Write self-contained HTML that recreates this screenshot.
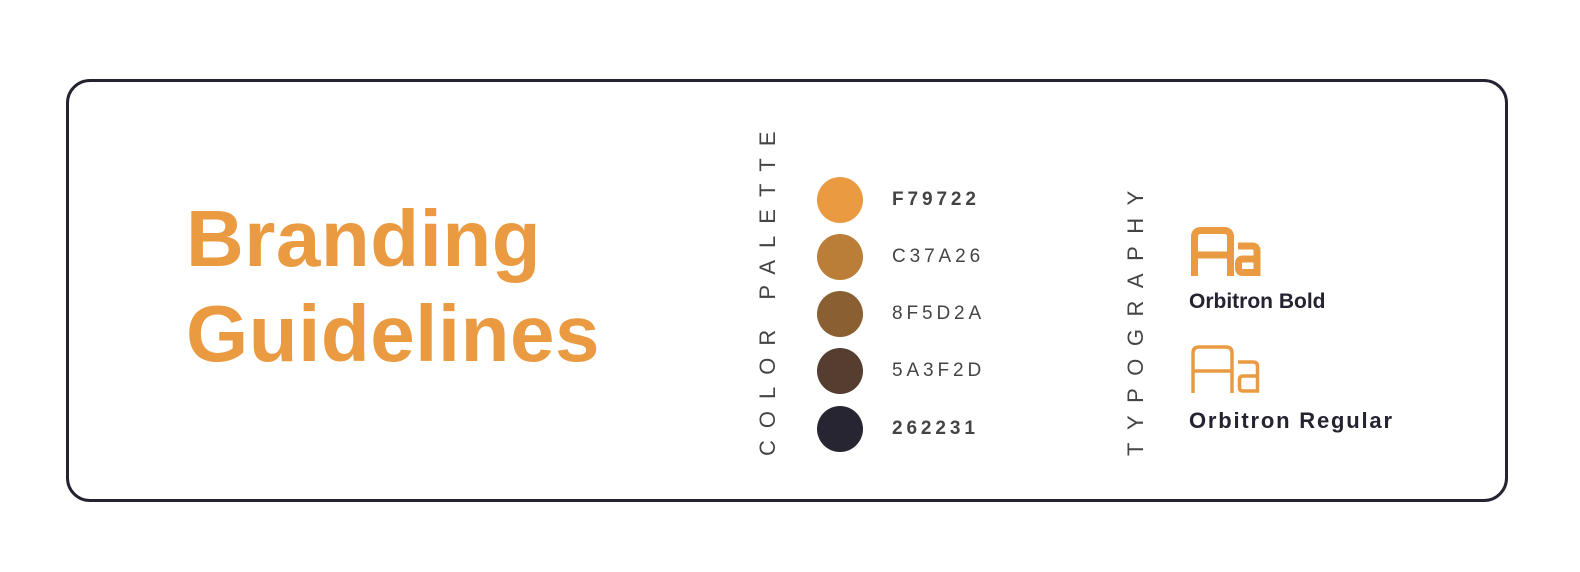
<!DOCTYPE html>
<html><head><meta charset="utf-8"><style>
html,body{margin:0;padding:0;background:#fff;width:1580px;height:572px;overflow:hidden;font-family:"Liberation Sans",sans-serif}
.card{position:absolute;left:66px;top:79px;width:1436px;height:417px;border:3px solid #262231;border-radius:24px}
.t{position:absolute;left:186px;color:#EA9A40;font-weight:bold;font-size:80px;line-height:1;letter-spacing:0.5px}
.v{position:absolute;transform-origin:0 0;transform:rotate(-90deg);color:#444;font-size:22px;white-space:nowrap}
.c{position:absolute;left:817px;width:46px;height:46px;border-radius:50%}
.h{position:absolute;left:892px;font-size:19px;letter-spacing:3.9px;color:#444}
.b{font-weight:bold}
.o{position:absolute;left:1189px;color:#262231;font-weight:bold}
</style></head><body>
<div class="card"></div>
<div class="t" style="top:199px">Branding</div>
<div class="t" style="top:294px">Guidelines</div>
<div class="v" style="left:755px;top:456px;letter-spacing:12px">COLOR PALETTE</div>
<div class="c" style="top:177px;background:#EA9B42"></div>
<div class="c" style="top:234px;background:#BA7E39"></div>
<div class="c" style="top:291px;background:#8A5F32"></div>
<div class="c" style="top:348px;background:#553D2F"></div>
<div class="c" style="top:406px;background:#262531"></div>
<div class="h b" style="top:189px">F79722</div>
<div class="h" style="top:246px">C37A26</div>
<div class="h" style="top:303px">8F5D2A</div>
<div class="h" style="top:360px">5A3F2D</div>
<div class="h b" style="top:418px">262231</div>
<div class="v" style="left:1123px;top:456px;letter-spacing:12.5px">TYPOGRAPHY</div>
<svg style="position:absolute;left:1190px;top:226px" width="72" height="52" viewBox="0 0 72 52">
<g fill="none" stroke="#EA9B42" stroke-width="7">
<path d="M4.5 50V11Q4.5 4.5 11 4.5H34Q40.5 4.5 40.5 11V50M4.5 29H40.5"/>
<path d="M48 20H62Q67 20 67 25V46.5H53Q48.5 46.5 48.5 42V37.5Q48.5 33 53 33H66"/>
</g></svg>
<div class="o" style="top:290px;font-size:21px">Orbitron Bold</div>
<svg style="position:absolute;left:1190px;top:344px" width="72" height="52" viewBox="0 0 72 52">
<g fill="none" stroke="#EA9B42" stroke-width="3.5">
<path d="M3 49V9Q3 3 9 3H36Q42 3 42 9V49M3 27H42"/>
<path d="M48 18H63Q67.5 18 67.5 22.5V47H53Q49.5 47 49.5 43.5V36Q49.5 32 53 32H67"/>
</g></svg>
<div class="o" style="top:408px;font-size:22px;letter-spacing:1.8px">Orbitron Regular</div>
</body></html>
